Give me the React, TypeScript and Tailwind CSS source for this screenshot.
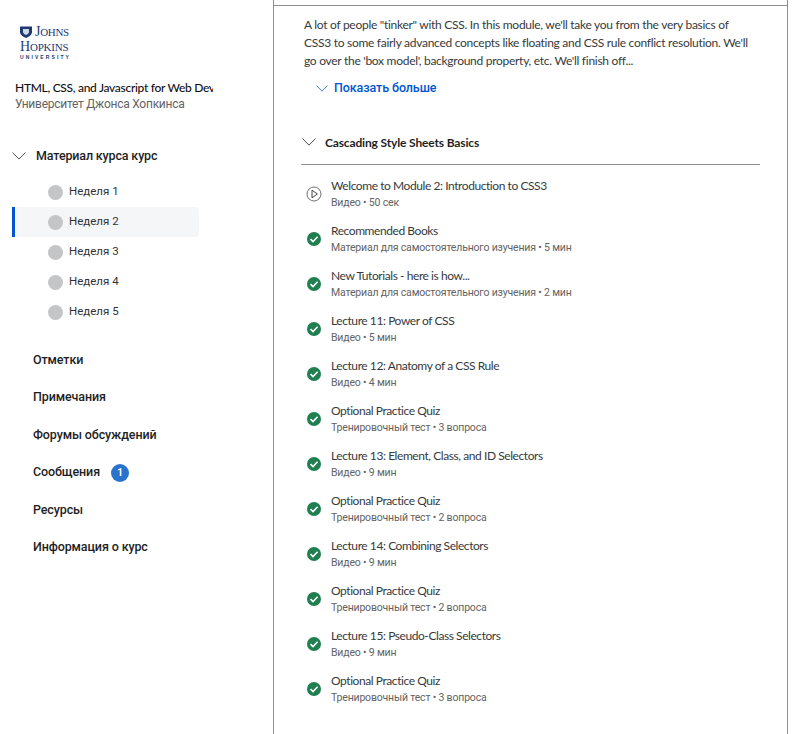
const weeks = ["Неделя 1", "Неделя 2", "Неделя 3", "Неделя 4", "Неделя 5"];
const links = ["Отметки", "Примечания", "Форумы обсуждений", "Сообщения", "Ресурсы", "Информация о курс"];
const items = [
  { title: "Welcome to Module 2: Introduction to CSS3", meta: "Видео • 50 сек", done: false },
  { title: "Recommended Books", meta: "Материал для самостоятельного изучения • 5 мин", done: true },
  { title: "New Tutorials - here is how...", meta: "Материал для самостоятельного изучения • 2 мин", done: true },
  { title: "Lecture 11: Power of CSS", meta: "Видео • 5 мин", done: true },
  { title: "Lecture 12: Anatomy of a CSS Rule", meta: "Видео • 4 мин", done: true },
  { title: "Optional Practice Quiz", meta: "Тренировочный тест • 3 вопроса", done: true },
  { title: "Lecture 13: Element, Class, and ID Selectors", meta: "Видео • 9 мин", done: true },
  { title: "Optional Practice Quiz", meta: "Тренировочный тест • 2 вопроса", done: true },
  { title: "Lecture 14: Combining Selectors", meta: "Видео • 9 мин", done: true },
  { title: "Optional Practice Quiz", meta: "Тренировочный тест • 2 вопроса", done: true },
  { title: "Lecture 15: Pseudo-Class Selectors", meta: "Видео • 9 мин", done: true },
  { title: "Optional Practice Quiz", meta: "Тренировочный тест • 3 вопроса", done: true },
];

const Chevron = ({ className }: { className: string }) => (
  <svg viewBox="0 0 16 9" fill="none" stroke="currentColor" strokeWidth="1" className={className}>
    <path d="M0.5 0.5 L8 8 L15.5 0.5" />
  </svg>
);

const DoneIcon = () => (
  <svg viewBox="0 0 16 16" className="w-4 h-4 shrink-0">
    <circle cx="8" cy="8" r="7" fill="#1f7f50" />
    <path d="M4.5 8.2 L7 10.6 L11.6 5.8" fill="none" stroke="#fff" strokeWidth="1.6" />
  </svg>
);

const PlayIcon = () => (
  <svg viewBox="0 0 16 16" className="w-4 h-4 shrink-0">
    <circle cx="8" cy="8" r="7" fill="none" stroke="#6f6f6f" strokeWidth="1" />
    <path d="M6 4.2 L11.4 8 L6 11.8 Z" fill="none" stroke="#444" strokeWidth="1" />
  </svg>
);

const Shield = () => (
  <svg viewBox="0 0 12 12" className="w-3 h-3 shrink-0">
    <path d="M0 0.5 H12 V6 C12 9 8.5 11 6 12 C3.5 11 0 9 0 6 Z" fill="#1f3a73" />
    <path d="M3 3 H9 V6 C9 7.5 7 8.5 6 9 C5 8.5 3 7.5 3 6 Z" fill="#cfd6e6" />
  </svg>
);

const App = () => {
  return (
    <div className="flex h-[734px] w-[794px] overflow-hidden bg-white font-['Lato','Roboto',sans-serif]">
      <aside className="w-[273px] shrink-0 pl-3">
        <div className="flex flex-col pl-2 pt-[25px] text-[#1f3a73] font-['Liberation_Serif',serif]">
          <div className="flex h-[13px] items-center gap-[3px] leading-none">
            <Shield />
            <span className="text-[14px] tracking-[-0.3px]">J<span className="text-[11px]">OHNS</span></span>
          </div>
          <span className="mt-[2px] h-[14px] text-[14px] leading-none tracking-[-0.2px]">H<span className="text-[11px]">OPKINS</span></span>
          <span className="text-[5px] leading-[6px] tracking-[2.1px] font-['Liberation_Sans',sans-serif] font-bold">UNIVERSITY</span>
        </div>
        <div className="mt-[19px] pl-[3px] w-[201px] overflow-hidden whitespace-nowrap text-[12px] leading-[18px] tracking-[-0.3px] text-[#111] font-medium">
          HTML, CSS, and Javascript for Web Developers
        </div>
        <div className="-mt-[1px] pl-[3px] text-[12px] leading-[16px] tracking-[-0.25px] text-[#636363] font-['Roboto',sans-serif]">Университет Джонса Хопкинса</div>

        <div className="mt-[34px] flex items-center gap-[10px] h-5">
          <Chevron className="w-[14px] h-2 text-[#333]" />
          <span className="text-[12.5px] tracking-[-0.15px] font-medium text-[#1f1f1f] font-['Roboto',sans-serif]">Материал курса курс</span>
        </div>
        <ul className="mt-[11px] w-[187px]">
          {weeks.map((w, i) => (
            <li
              key={w}
              className={`flex h-[30px] items-center gap-[6px] rounded-r-sm ${i === 1 ? "bg-[#f5f6f8] border-l-[3px] border-[#0056d2] pl-[33px]" : "pl-9"}`}
            >
              <span className="h-[15px] w-[15px] rounded-full bg-[#c4c5c7]" />
              <span className="text-[11.5px] text-[#333] font-['Roboto',sans-serif]">{w}</span>
            </li>
          ))}
        </ul>
        <ul className="mt-[14.5px] pl-[21px]">
          {links.map((l, i) => (
            <li key={l} className="flex h-[37.5px] items-center gap-[11px] text-[12.5px] tracking-[-0.12px] font-medium text-[#1f1f1f] font-['Roboto',sans-serif]">
              {l}
              {i === 3 && (
                <span className="flex h-[18px] w-[18px] items-center justify-center rounded-full bg-[#2a73cc] text-[10px] font-bold text-white">1</span>
              )}
            </li>
          ))}
        </ul>
      </aside>

      <main className="w-[515px] shrink-0 h-full border-x border-[#8f8f8f]">
        <div className="mt-[5px] border-t border-[#8f8f8f] pl-[30px] pr-[36px] pt-[10px]">
          <p className="text-[12px] leading-[18px] tracking-[-0.28px] text-[#373a3c]">
            A lot of people "tinker" with CSS. In this module, we'll take you from the very basics of CSS3 to some fairly advanced concepts like floating and CSS rule conflict resolution. We'll go over the 'box model', background property, etc. We'll finish off...
          </p>
          <div className="mt-[8px] ml-3 flex h-5 items-center gap-[6px] text-[#0056d2] text-[12.5px] tracking-[-0.1px] font-medium font-['Roboto',sans-serif]">
            <Chevron className="w-3 h-[7px]" />
            Показать больше
          </div>
        </div>
        <div className="ml-[27px] mt-[37px] flex h-[30px] w-[459px] items-start gap-[8px] border-b border-[#8f8f8f]">
          <Chevron className="mt-[3px] w-4 h-2 text-[#333]" />
          <span className="text-[12px] font-bold leading-[15px] tracking-[-0.15px] text-[#1f1f1f]">Cascading Style Sheets Basics</span>
        </div>
        <ul className="mt-[6px] pl-[32px]">
          {items.map((it, i) => (
            <li key={i} className="flex h-[45px] items-center gap-[9px]">
              {it.done ? <DoneIcon /> : <PlayIcon />}
              <div className="flex flex-col pt-[1px]">
                <span className="text-[12px] leading-[16px] tracking-[-0.43px] text-[#373a3c]">{it.title}</span>
                <span className="mt-[1px] text-[10.5px] leading-[16px] tracking-[-0.18px] text-[#636363] font-['Roboto',sans-serif]">{it.meta}</span>
              </div>
            </li>
          ))}
        </ul>
      </main>
    </div>
  );
};

export default App;
